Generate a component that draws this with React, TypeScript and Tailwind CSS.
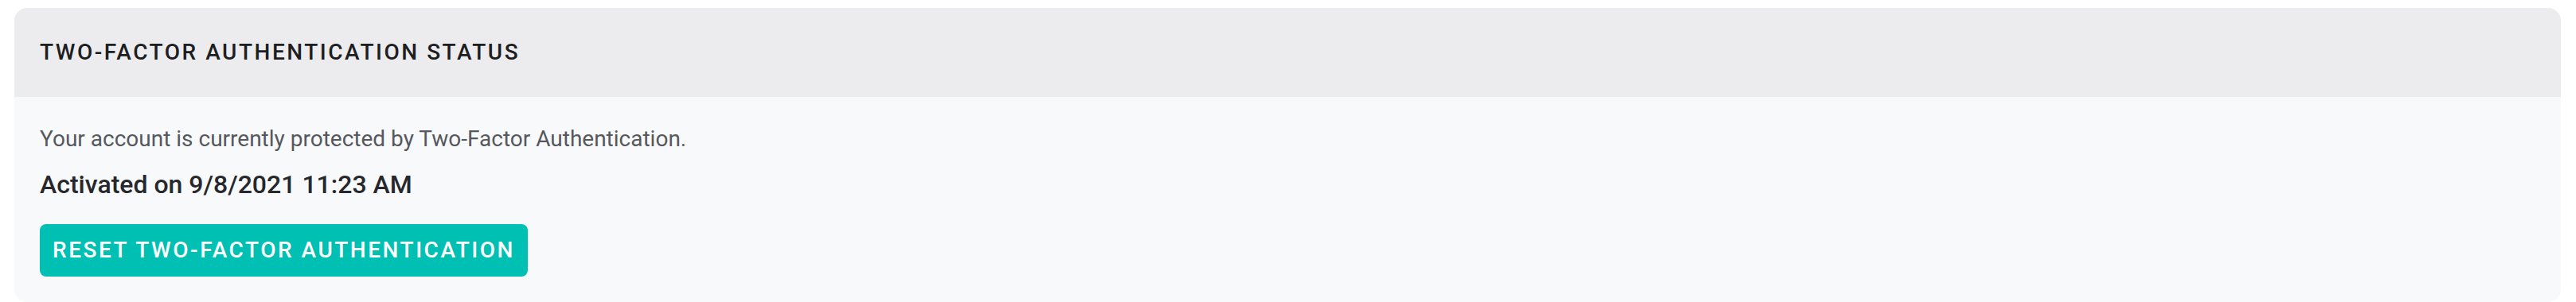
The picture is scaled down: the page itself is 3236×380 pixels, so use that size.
export default function App() {
  return (
    <div className="min-h-screen bg-white pt-[10px] pl-[18px] pr-[19px] font-['Roboto',sans-serif]">
      <section className="overflow-hidden rounded-2xl bg-[#f8f9fb]">
        {/* Header */}
        <div className="flex h-[112px] items-center bg-[#ececee] px-8">
          <h2 className="text-[28px] font-medium uppercase tracking-[0.09em] text-[#1d1e22]">
            Two-Factor Authentication Status
          </h2>
        </div>

        {/* Body */}
        <div className="px-8 pt-8 pb-8">
          <p className="text-[28px] leading-[42px] text-[#56585e]">
            Your account is currently protected by Two-Factor Authentication.
          </p>
          <p className="mt-3 text-[32px] font-medium leading-[48px] text-[#26282d]">
            Activated on 9/8/2021 11:23 AM
          </p>
          <button
            type="button"
            className="mt-[26px] flex h-[66px] items-center rounded-lg bg-[#00bfb3] px-4 text-[28px] font-medium uppercase tracking-[0.09em] text-white"
          >
            Reset Two-Factor Authentication
          </button>
        </div>
      </section>
    </div>
  )
}
